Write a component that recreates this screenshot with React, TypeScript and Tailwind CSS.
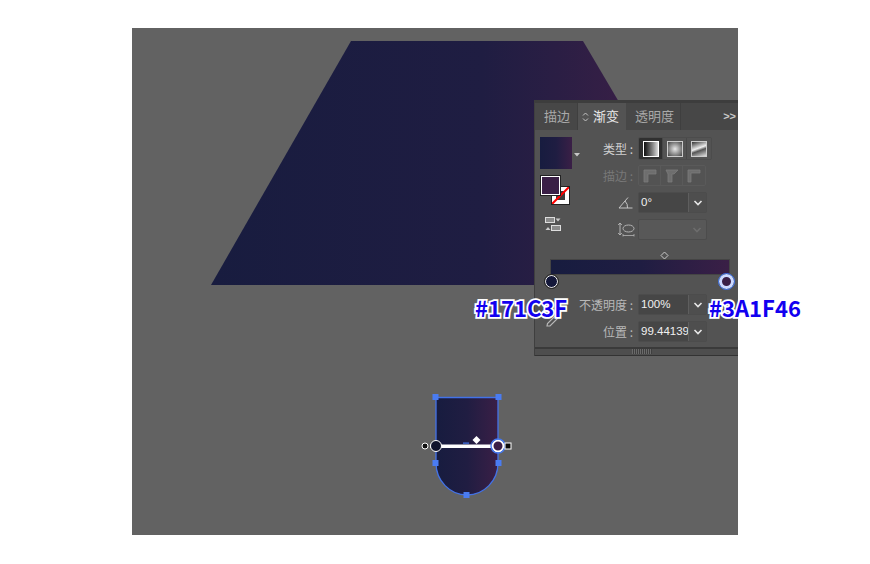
import React from "react";

const ChevronDown = ({ dim = false }: { dim?: boolean }) => (
  <svg width="10" height="6" viewBox="0 0 10 6" fill="none" stroke={dim ? "#6d6d6d" : "#e6e6e6"} strokeWidth="1.6">
    <path d="M1.5 1 L5 4.5 L8.5 1" />
  </svg>
);

const TypeButton = ({ active = false, children }: { active?: boolean; children: React.ReactNode }) => (
  <div className={`w-[24px] h-[21px] flex items-center justify-center border-r border-[#484848] last:border-r-0 ${active ? "bg-[#303030]" : "bg-[#535353]"}`}>
    {children}
  </div>
);

const Combo = ({ value, dim = false }: { value: string; dim?: boolean }) => (
  <div className={`w-[69px] h-[21px] flex rounded-[2px] border border-[#4c4c4c] ${dim ? "bg-[#585858]" : "bg-[#464646]"}`}>
    <div className="flex-1 min-w-0 overflow-hidden pl-[2px] text-[11.5px] leading-[18px] text-[#f0f0f0] font-['Liberation_Sans','DejaVu_Sans',sans-serif] whitespace-nowrap">{value}</div>
    <div className={`w-[18px] flex items-center justify-center ${dim ? "" : "border-l border-[#5e5e5e] bg-[#4e4e4e]"}`}>
      <ChevronDown dim={dim} />
    </div>
  </div>
);

const Handle = ({ x, y }: { x: number; y: number }) => <rect x={x - 3} y={y - 3} width="6" height="6" fill="#4a7cf2" />;

const Artwork = () => (
  <svg className="absolute left-0 top-0" width="606" height="507" viewBox="132 28 606 507">
    <defs>
      <linearGradient id="trap" gradientUnits="userSpaceOnUse" x1="211" y1="0" x2="640" y2="0">
        <stop offset="0" stopColor="#181C3F" />
        <stop offset="0.63" stopColor="#1F1D42" />
        <stop offset="0.8" stopColor="#2A1E44" />
        <stop offset="1" stopColor="#3A1F46" />
      </linearGradient>
      <linearGradient id="shield" gradientUnits="userSpaceOnUse" x1="436" y1="0" x2="498" y2="0">
        <stop offset="0" stopColor="#171C3F" />
        <stop offset="0.5" stopColor="#201D42" />
        <stop offset="1" stopColor="#3A1F46" />
      </linearGradient>
    </defs>
    <polygon points="351,41 583,41 727,285 211,285" fill="url(#trap)" />
    <path d="M436 397.5 H498 V463 A31 32 0 0 1 436 463 Z" fill="url(#shield)" stroke="#4272e8" strokeWidth="1.3" />
    <Handle x={435.5} y={397} />
    <Handle x={498.5} y={397} />
    <Handle x={435.5} y={463} />
    <Handle x={498.5} y={463} />
    <Handle x={466.5} y={495} />
    <rect x="463" y="442.5" width="6" height="1.2" fill="#4478f0" />
    <rect x="430" y="444.5" width="70" height="3.5" fill="#ffffff" />
    <circle cx="425" cy="446" r="3" fill="#111" stroke="#fff" strokeWidth="1" />
    <circle cx="436" cy="446" r="5.5" fill="#10132c" stroke="#fff" strokeWidth="1" />
    <circle cx="498" cy="446" r="5.5" fill="#3A1F46" stroke="#fff" strokeWidth="2" />
    <circle cx="498" cy="446" r="7" fill="none" stroke="#4478f0" strokeWidth="1.4" />
    <rect x="505" y="443" width="6" height="6" fill="#0c0c0c" stroke="#fff" strokeWidth="1" />
    <polygon points="476.5,436 480.5,440 476.5,444 472.5,440" fill="#fff" />
  </svg>
);

const Tabs = () => (
  <div className="h-[27px] flex bg-[#474747] text-[13px] text-[#a9a9a9] leading-[25px]">
    <div className="w-[43px] pl-[9px] border-r border-[#3f3f3f]">描边</div>
    <div className="w-[48px] bg-[#535353] text-[#e8e8e8] flex">
      <span className="w-[15px] flex items-center justify-center">
        <svg width="7" height="10" viewBox="0 0 7 10" fill="none" stroke="#c4c4c4" strokeWidth="1">
          <path d="M1 3.5 L3.5 1 L6 3.5 M1 6.5 L3.5 9 L6 6.5" />
        </svg>
      </span>
      <span>渐变</span>
    </div>
    <div className="w-[55px] pl-[9px] border-r border-[#3f3f3f]">透明度</div>
    <div className="flex-1 flex justify-end pr-[2px] items-center">
      <span className="text-[11px] text-[#c8c8c8] font-['Liberation_Sans',sans-serif] font-bold">&gt;&gt;</span>
    </div>
  </div>
);

const LeftTools = () => (
  <div className="w-[67px] pl-[5px] pt-[7px] flex flex-col">
    <div className="flex items-center">
      <div className="w-[32px] h-[32px] bg-[linear-gradient(90deg,#171C3F_0%,#1F1D42_50%,#3A1F46_100%)]" />
      <svg className="ml-[2px] mt-[3px]" width="6" height="4" viewBox="0 0 6 4"><polygon points="0,0 6,0 3,3.5" fill="#c8c8c8" /></svg>
    </div>
    <div className="relative w-[30px] h-[30px] mt-[7px] ml-[1px]">
      <div className="absolute left-[10px] top-[10px] w-[19px] h-[19px] bg-white border border-[#222] overflow-hidden flex items-center justify-center">
        <div className="w-[9px] h-[9px] bg-[#3c3c3c]" />
        <svg className="absolute left-0 top-0" width="17" height="17" viewBox="0 0 17 17"><line x1="0" y1="17" x2="17" y2="0" stroke="#f00" strokeWidth="2" /></svg>
      </div>
      <div className="absolute left-0 top-0 w-[19px] h-[19px] bg-[#3A1F46] border border-white outline outline-1 outline-[#222]" />
    </div>
    <svg className="mt-[11px] ml-[5px]" width="16" height="15" viewBox="0 0 16 15">
      <rect x="0.5" y="0.5" width="9" height="5" fill="#8a8a8a" stroke="#ddd" />
      <polygon points="10.5,1.5 15.5,1.5 13,4.5" fill="#ccc" />
      <rect x="6.5" y="8.5" width="9" height="5" fill="#8a8a8a" stroke="#ddd" />
      <polygon points="0.5,13 5.5,13 3,10" fill="#ccc" />
    </svg>
  </div>
);

const RightControls = () => (
  <div className="flex-1 pt-[7px] flex flex-col">
    <div className="flex items-center h-[23px]">
      <div className="w-[36px] pr-[5px] text-[12px] text-[#d0d0d0] text-right whitespace-nowrap">类型 :</div>
      <div className="flex border border-[#4c4c4c] rounded-[2px] overflow-hidden">
        <TypeButton active>
          <div className="w-[16px] h-[16px] border border-white bg-gradient-to-r from-[#111] to-[#ddd]" />
        </TypeButton>
        <TypeButton>
          <div className="w-[16px] h-[16px] border border-[#ccc] bg-[radial-gradient(circle,#e8e8e8,#444)]" />
        </TypeButton>
        <TypeButton>
          <div className="w-[16px] h-[16px] border border-[#ccc] bg-[linear-gradient(160deg,#333,#eee_45%,#555_60%,#ddd)]" />
        </TypeButton>
      </div>
    </div>
    <div className="flex items-center h-[21px] mt-[5px]">
      <div className="w-[36px] pr-[5px] text-[12px] text-[#787878] text-right whitespace-nowrap">描边 :</div>
      <div className="flex border border-[#5a5a5a] rounded-[2px]">
        {["M1 13 V1 H13 V5 H5 V13 Z", "M1 1 H13 L9 5 H7 V13 H3 V5 Z", "M1 13 V1 H13 V4 H4 V13 Z"].map((d, i) => (
          <div key={i} className="w-[22px] h-[19px] flex items-center justify-center border-r border-[#5a5a5a] last:border-r-0">
            <svg width="14" height="14" viewBox="0 0 14 14"><path d={d} fill="#6e6e6e" stroke="#7c7c7c" strokeWidth="0.8" /></svg>
          </div>
        ))}
      </div>
    </div>
    <div className="flex items-center h-[21px] mt-[6px]">
      <div className="w-[36px] flex justify-end pr-[5px]">
        <svg width="15" height="13" viewBox="0 0 15 13" fill="none" stroke="#c4c4c4" strokeWidth="1">
          <path d="M14.5 12 H1 L10 1.5 M7 5 Q10 8 9.5 12" />
        </svg>
      </div>
      <Combo value="0°" />
    </div>
    <div className="flex items-center h-[21px] mt-[6px]">
      <div className="w-[36px] flex justify-end pr-[3px]">
        <svg width="18" height="15" viewBox="0 0 18 15" fill="none" stroke="#b4b4b4" strokeWidth="1">
          <path d="M3 1 V13 M1.2 3 L3 1 L4.8 3 M1.2 11 L3 13 L4.8 11" />
          <ellipse cx="11.5" cy="6.5" rx="5.5" ry="3.5" />
          <path d="M6 13.5 H17 M6 12 V14.5 M17 12 V14.5" strokeWidth="0.8" />
        </svg>
      </div>
      <Combo value="" dim />
    </div>
  </div>
);

const GradientSlider = () => (
  <div className="relative h-[46px] px-[15px]">
    <svg className="absolute left-[125px] top-[3px]" width="9" height="9" viewBox="0 0 9 9" fill="none" stroke="#c8c8c8" strokeWidth="1">
      <polygon points="4.5,1 8,4.5 4.5,8 1,4.5" />
    </svg>
    <div className="relative top-[11px] w-[180px] h-[16px] bg-[linear-gradient(90deg,#171C3F_0%,#1F1D42_50%,#3A1F46_100%)] border border-[#444]" />
    <div className="absolute left-[10px] top-[27px] w-[13px] h-[13px] rounded-full bg-[#14183a] border-[1.5px] border-white outline outline-1 outline-[#222]" />
    <div className="absolute left-[184px] top-[26px] w-[15px] h-[15px] rounded-full bg-[#3A1F46] border-[3px] border-[#cddaff] outline outline-[1.5px] outline-[#4478f0]" />
  </div>
);

const BottomRows = () => (
  <div className="relative">
    <div className="flex flex-col gap-[6px] pl-[42px]">
      <div className="flex items-center h-[21px]">
        <div className="w-[61px] pr-[5px] text-[12px] leading-[19px] text-[#b8b8b8] text-right whitespace-nowrap">不透明度 :</div>
        <Combo value="100%" />
      </div>
      <div className="flex items-center h-[21px]">
        <div className="w-[61px] pr-[5px] text-[12px] leading-[19px] text-[#b8b8b8] text-right whitespace-nowrap">位置 :</div>
        <Combo value="99.44139" />
      </div>
    </div>
    <svg className="absolute left-[11px] top-[19px]" width="15" height="14" viewBox="0 0 15 14" fill="none" stroke="#b8b8b8" strokeWidth="1.2">
      <path d="M1 13 L1.5 10.5 L9 3 L11.5 5.5 L4 13 Z" />
    </svg>
  </div>
);

const PanelFooter = () => (
  <div className="mt-[5px]">
    <div className="h-[2px] bg-[#3a3a3a]" />
    <div className="h-[6px] bg-[#4e4e4e] flex justify-center">
      <div className="w-[20px] h-[5px] mr-[-10px] bg-[repeating-linear-gradient(90deg,#6a6a6a_0,#6a6a6a_1px,#3f3f3f_1px,#3f3f3f_2px)]" />
    </div>
    <div className="h-[1px] bg-[#333]" />
  </div>
);

const Panel = () => (
  <div className="absolute left-[402px] top-[72px] w-[204px] h-[256px] overflow-hidden bg-[#535353] border-l border-[#3f3f3f] border-t-[3px] border-t-[#3d3d3d]">
    <Tabs />
    <div className="flex h-[122px] mb-[-4px]">
      <LeftTools />
      <RightControls />
    </div>
    <GradientSlider />
    <BottomRows />
    <PanelFooter />
  </div>
);

const Label = ({ text, pos }: { text: string; pos: string }) => (
  <div className={`absolute ${pos} text-[22px] leading-[30px] font-bold text-[#1200f0] [-webkit-text-stroke:3.5px_#ffffff] [paint-order:stroke_fill] whitespace-nowrap`}>
    {text}
  </div>
);

export default function App() {
  return (
    <div className="w-[870px] h-[564px] bg-white pt-[28px] pl-[132px] overflow-hidden font-['Noto_Sans_CJK_SC','Noto_Sans',sans-serif]">
      <div className="relative w-[606px] h-[507px] bg-[#626262]">
        <Artwork />
        <Panel />
        <Label text="#171C3F" pos="left-[343px] top-[264px]" />
        <Label text="#3A1F46" pos="left-[577px] top-[264px]" />
      </div>
    </div>
  );
}
